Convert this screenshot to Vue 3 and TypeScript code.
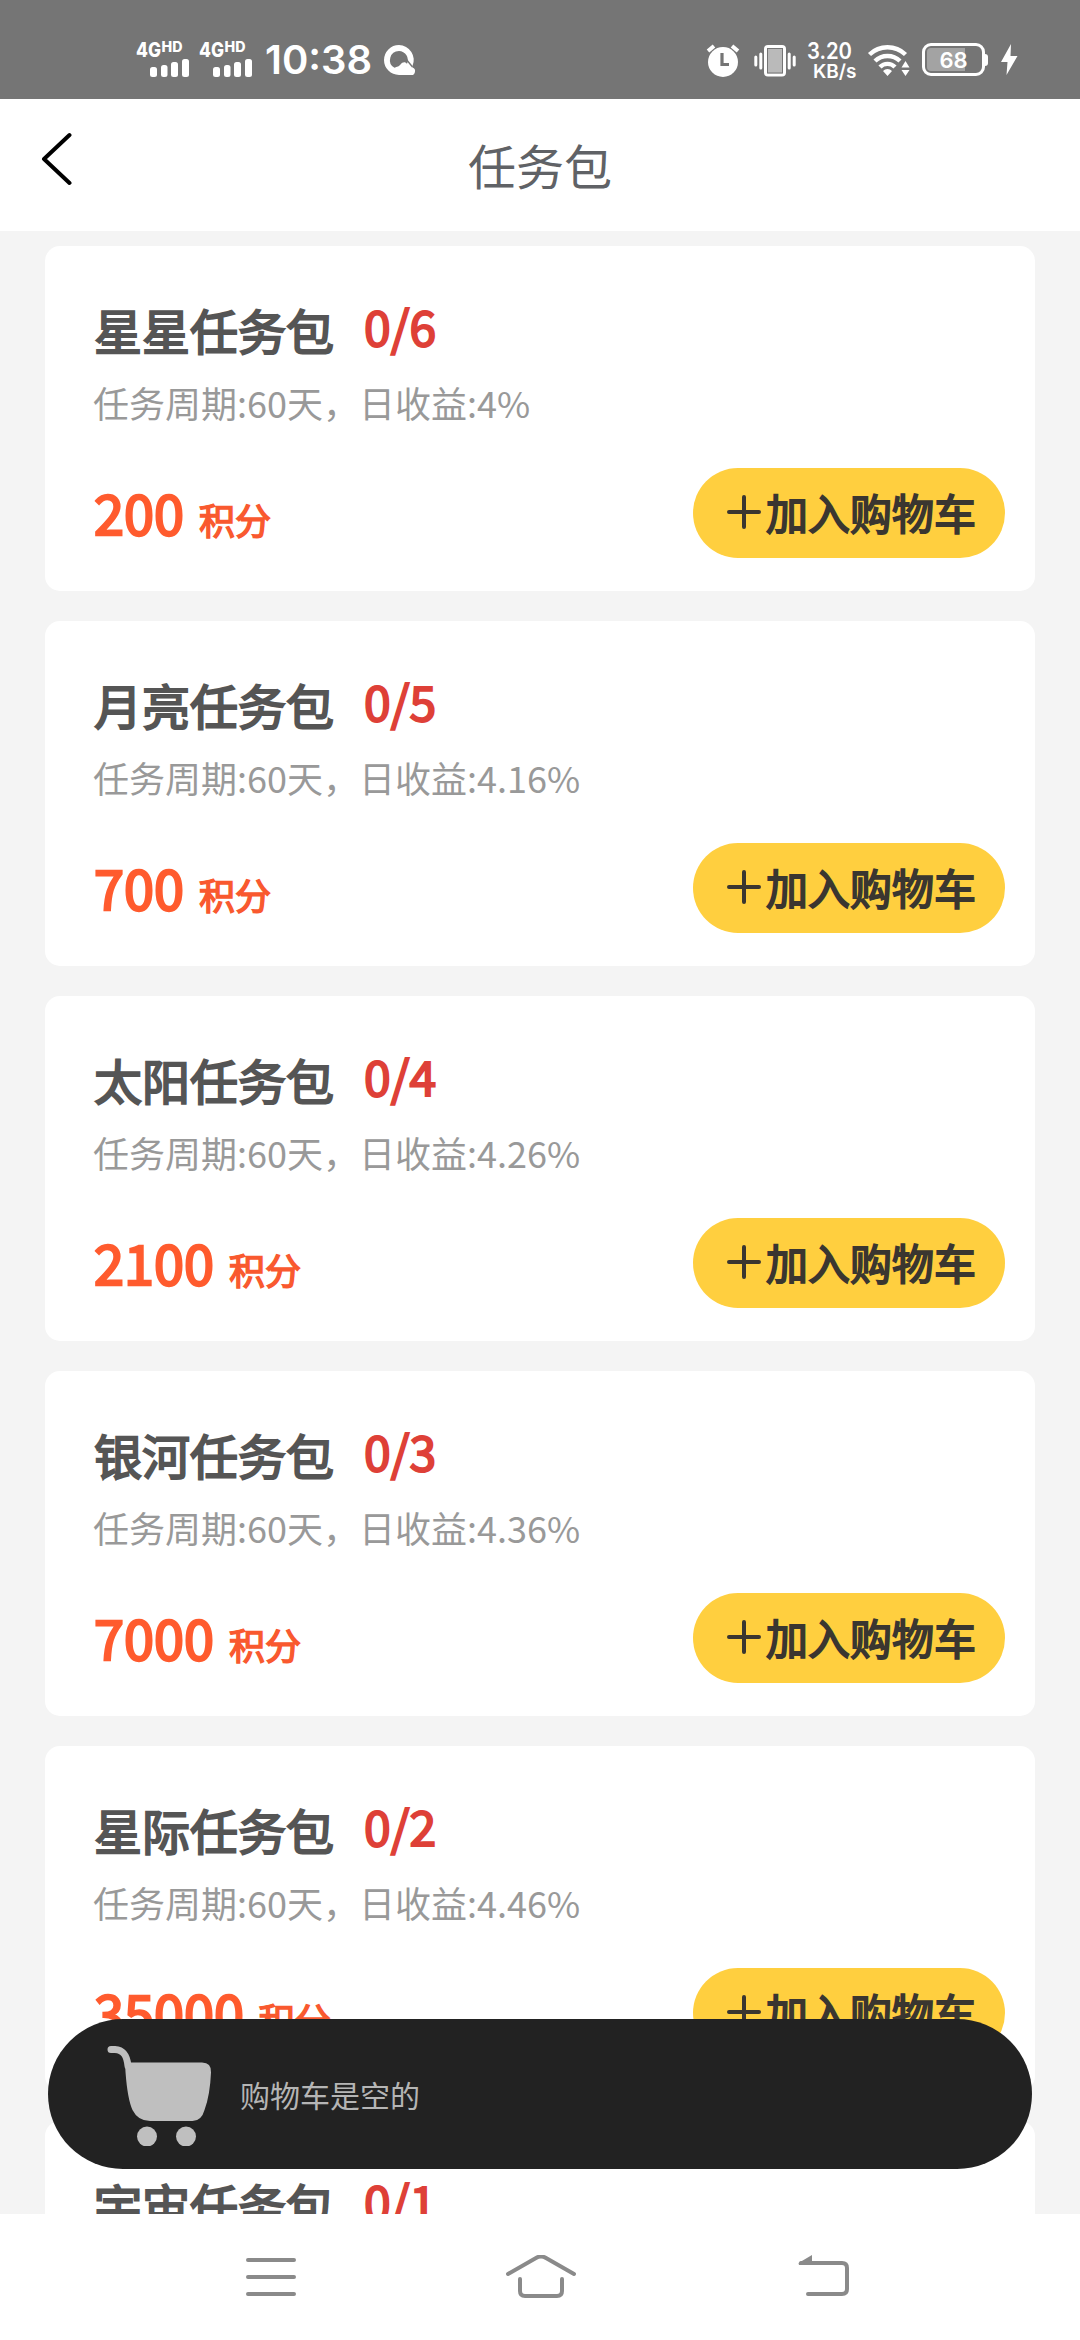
<script setup lang="ts">
interface TaskPack {
  name: string
  count: string
  rate: string
  points: number
}

const packs: TaskPack[] = [
  { name: '星星任务包', count: '0/6', rate: '4%', points: 200 },
  { name: '月亮任务包', count: '0/5', rate: '4.16%', points: 700 },
  { name: '太阳任务包', count: '0/4', rate: '4.26%', points: 2100 },
  { name: '银河任务包', count: '0/3', rate: '4.36%', points: 7000 },
  { name: '星际任务包', count: '0/2', rate: '4.46%', points: 35000 },
  { name: '宇宙任务包', count: '0/1', rate: '4.56%', points: 70000 },
]
</script>

<template>
  <div class="screen">
    <div class="status">
      <svg v-for="sim in 2" :key="sim" class="signal" width="54" height="36" viewBox="0 0 54 36">
        <text x="0" y="15.6" class="net" font-size="20" textLength="25" lengthAdjust="spacingAndGlyphs">4G</text>
        <text x="25.5" y="11" class="net" font-size="14" textLength="21" lengthAdjust="spacingAndGlyphs">HD</text>
        <rect x="14" y="26" width="7" height="10" rx="2.5" />
        <rect x="25" y="24" width="6.5" height="12" rx="2.5" />
        <rect x="35" y="21" width="7" height="15" rx="2.5" />
        <rect x="46" y="18" width="7" height="18" rx="2.5" />
      </svg>
      <span class="time">10:38</span>
      <svg class="browser" width="30" height="30" viewBox="0 0 30 30">
        <path fill-rule="evenodd" d="M15 0a15 15 0 0 1 13.500 21L28.500 22.500a3.900 3.900 0 0 1-2 7.500H15a15 15 0 0 1 0-30zM15 6a9 9 0 0 0-4.500 16.800l2.500-1c1.500-.3 2.500-1 3.500-2.200 2-3 5-3 6.500-.8A9 9 0 0 0 15 6z" />
        <path d="M22 14l6.500 8" fill="none" stroke="#757575" stroke-width="1.300" />
      </svg>
      <div class="spacer"></div>
      <svg class="alarm" width="34" height="33" viewBox="0 0 34 33">
        <circle cx="17" cy="18" r="15" />
        <path d="M2 7l6-5M32 7l-6-5" stroke="#fff" stroke-width="4" />
        <path d="M16 9v11.500h7" fill="none" stroke="#757575" stroke-width="3.200" />
      </svg>
      <svg class="vibrate" width="42" height="32" viewBox="0 0 42 32">
        <rect x="11.500" y="1.500" width="19" height="28.500" rx="2.500" fill="#bababa" stroke="#fff" stroke-width="3" />
        <rect x="13.500" y="3.500" width="15" height="24.500" fill="none" stroke="#757575" stroke-width="1" />
        <path d="M1.800 12v8M6.800 9v14M35.200 9v14M40.200 12v8" stroke="#fff" stroke-width="3" stroke-linecap="round" />
      </svg>
      <svg class="speed" width="51" height="36" viewBox="0 0 51 36">
        <text x="0" y="16.300" class="rate" font-size="22.500" textLength="45" lengthAdjust="spacingAndGlyphs">3.20</text>
        <text x="6" y="34.500" class="rate" font-size="19" textLength="43.500" lengthAdjust="spacingAndGlyphs">KB/s</text>
      </svg>
      <svg class="wifi" width="42" height="32" viewBox="0 0 42 32">
        <g fill="none" stroke="#fff" stroke-width="4.400">
          <path d="M1.500 9.500a26 26 0 0 1 36 0" />
          <path d="M7 16a18 18 0 0 1 25 0" />
          <path d="M12 22a10.500 10.500 0 0 1 15 0" />
        </g>
        <path d="M19.500 31l-4.500-5a6.300 6.300 0 0 1 9 0zM37.500 16l4 6.500h-8zM37.500 31l4-6h-8z" />
      </svg>
      <div class="battery">
        <div class="cell"><span>68</span></div>
        <i class="nub"></i>
      </div>
      <svg class="bolt" width="17" height="31" viewBox="0 0 17 31">
        <path d="M10 0L0 18h6.500L5.500 31 16.500 12H9.500z" />
      </svg>
    </div>

    <header class="header">
      <svg class="back" width="32" height="54" viewBox="0 0 32 54">
        <path d="M29.500 3L4 27l25.500 24" fill="none" stroke="#000" stroke-width="4" stroke-linecap="round" stroke-linejoin="round" />
      </svg>
      <h1>任务包</h1>
    </header>

    <main class="list">
      <section v-for="pack in packs" :key="pack.name" class="card">
        <div class="head">
          <span class="name">{{ pack.name }}</span>
          <span class="count">{{ pack.count }}</span>
        </div>
        <p class="cycle">任务周期:60天，日收益:{{ pack.rate }}</p>
        <div class="foot">
          <div class="price">
            <span class="points">{{ pack.points }}</span>
            <span class="unit">积分</span>
          </div>
          <button class="add">
            <svg width="34" height="34" viewBox="0 0 34 34">
              <path d="M2 17h30M17 2v30" fill="none" stroke="#3a3630" stroke-width="4" stroke-linecap="round" />
            </svg>
            <span>加入购物车</span>
          </button>
        </div>
      </section>
    </main>

    <div class="cart">
      <svg width="106" height="104" viewBox="0 0 106 104">
        <path d="M4 7.500h4C17 8 20 14 21 24" fill="none" stroke="#bfbfbf" stroke-width="7" stroke-linecap="round" />
        <path d="M18 20.500H95q9.500 0 9 10-1 23-6.500 37.500-3 11-12 11H43q-12 0-17.500-11Q20.500 57 18.500 30z" />
        <circle cx="40" cy="94.500" r="10" />
        <circle cx="79" cy="94.500" r="10" />
      </svg>
      <span>购物车是空的</span>
    </div>

    <nav class="nav">
      <svg width="54" height="44" viewBox="0 0 54 44">
        <path d="M4 5h46M4 22h46M4 39h46" />
      </svg>
      <svg class="home" width="74" height="46" viewBox="0 0 74 46">
        <path d="M4 19L32 3q5-3 10 0L70 19M16 24v12q0 5 5 5h32q5 0 5-5V24" />
      </svg>
      <svg width="54" height="44" viewBox="0 0 54 44">
        <path d="M4 8h41q5 0 5 5v21q0 5-5 5H11" />
        <path class="solid" d="M1.500 8L15 0v10H2z" />
      </svg>
    </nav>
  </div>
</template>

<style>
body {
  margin: 0;
}
</style>

<style scoped>
.screen {
  position: relative;
  display: flex;
  flex-direction: column;
  width: 1080px;
  height: 2340px;
  overflow: hidden;
  background: #f4f4f4;
  font-family: "Noto Sans CJK SC", sans-serif;
}

.status {
  display: flex;
  flex: none;
  align-items: flex-start;
  box-sizing: border-box;
  height: 99px;
  padding: 41px 62px 0 136px;
  background: #757575;
  color: #fff;
  font-family: Inter, sans-serif;
}

.status svg {
  flex: none;
  overflow: visible;
  fill: #fff;
}

.net {
  font-weight: 800;
}

.rate {
  font-weight: 600;
}

.signal {
  margin-right: 9px;
}

.time {
  width: 104px;
  margin-left: 3px;
  font-size: 40px;
  font-weight: 600;
  line-height: 38px;
}

.browser {
  margin: 4px 0 0 15px;
}

.spacer {
  flex: 1;
}

.alarm {
  margin: 3px 14px 0 0;
}

.vibrate {
  margin: 4px 11px 0 0;
}

.speed {
  margin: 2px 10px 0 0;
}

.wifi {
  margin: 4px 12px 0 0;
}

.battery {
  display: flex;
  align-items: center;
  margin: 2px 13px 0 0;
}

.cell {
  box-sizing: border-box;
  width: 63px;
  height: 33px;
  padding: 2px;
  border: 3px solid #fff;
  border-radius: 9px;
  background: linear-gradient(90deg, #a3a3a3 38px, transparent 38px) content-box;
  font-size: 22px;
  font-weight: 600;
  line-height: 24px;
  text-align: center;
}

.nub {
  width: 3px;
  height: 12px;
  border-radius: 0 3px 3px 0;
  background: #fff;
}

.bolt {
  margin-top: 3px;
}

.header {
  display: grid;
  flex: none;
  grid-template-columns: 1fr auto 1fr;
  align-items: start;
  height: 132px;
  background: #fff;
}

.back {
  margin: 33px 0 0 40px;
}

h1 {
  margin: 30px 0 0;
  color: #606266;
  font-size: 48px;
  font-weight: 400;
  line-height: 70px;
}

.list {
  display: flex;
  flex: 1;
  flex-direction: column;
  gap: 30px;
  min-height: 0;
  padding: 15px 45px 0;
  overflow: hidden;
}

.card {
  box-sizing: border-box;
  flex: none;
  height: 345px;
  padding: 45px 30px 33px 48px;
  border-radius: 15px;
  background: #fff;
}

.head {
  display: flex;
  align-items: flex-start;
  gap: 30px;
  height: 80px;
  padding-left: 1px;
  font-size: 48px;
}

.name {
  color: #555;
  line-height: 76px;
  -webkit-text-stroke: 2px #555;
}

.count {
  color: #de4037;
  line-height: 69px;
  -webkit-text-stroke: 2px #de4037;
}

.cycle {
  margin: 0;
  color: #999;
  font-size: 36px;
  line-height: 62px;
}

.foot {
  display: flex;
  align-items: flex-start;
  justify-content: space-between;
  margin-top: 35px;
}

.price {
  display: flex;
  align-items: baseline;
  gap: 15px;
  padding-left: 1px;
  color: #ff5b2e;
}

.points {
  font-size: 54px;
  line-height: 88px;
  -webkit-text-stroke: 2.4px #ff5b2e;
}

.unit {
  font-size: 36px;
  color: #f9592f;
  -webkit-text-stroke: 1.5px #f9592f;
}

.add {
  display: flex;
  align-items: flex-start;
  box-sizing: border-box;
  width: 312px;
  height: 90px;
  padding: 27px 0 0 34px;
  border: 0;
  border-radius: 45px;
  background: #ffcf3f;
  color: #3a3630;
  font: 400 42px "Noto Sans CJK SC", sans-serif;
  -webkit-text-stroke: 1.8px #3a3630;
}

.add span {
  margin: -13px 0 0 5px;
  line-height: 60px;
  white-space: nowrap;
}

.cart {
  position: absolute;
  bottom: 171px;
  left: 48px;
  display: flex;
  align-items: center;
  box-sizing: border-box;
  width: 984px;
  height: 150px;
  padding-left: 59px;
  border-radius: 75px;
  background: #222;
  color: #b5b5b5;
  font-size: 30px;
}

.cart svg {
  margin-right: 27px;
  fill: #bfbfbf;
}

.nav {
  display: flex;
  flex: none;
  align-items: flex-start;
  justify-content: space-between;
  box-sizing: border-box;
  height: 126px;
  padding: 41px 229px 0 244px;
  background: #fff;
}

.nav path {
  fill: none;
  stroke: #8a8a8a;
  stroke-width: 4;
  stroke-linecap: round;
  stroke-linejoin: round;
}

.home {
  margin-right: 13px;
}

.nav .solid {
  fill: #8a8a8a;
  stroke: none;
}
</style>
